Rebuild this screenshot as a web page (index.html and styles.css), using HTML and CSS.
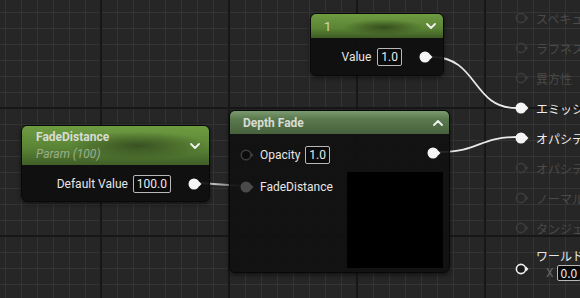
FILE: index.html
```html
<!DOCTYPE html>
<html>
<head>
<meta charset="utf-8">
<link rel="stylesheet" href="styles.css">
</head>
<body>
<div class="canvas">
  <div class="result">
    <div class="prow off"><svg class="pin" viewBox="0 0 14 12"><circle cx="6" cy="6" r="4.6" class="hollow"/><path d="M11 3.5 L13.5 6 L11 8.5Z" class="arrow"/></svg><span>スペキュラー</span></div>
    <div class="prow off"><svg class="pin" viewBox="0 0 14 12"><circle cx="6" cy="6" r="4.6" class="hollow"/><path d="M11 3.5 L13.5 6 L11 8.5Z" class="arrow"/></svg><span>ラフネス</span></div>
    <div class="prow off"><svg class="pin" viewBox="0 0 14 12"><circle cx="6" cy="6" r="4.6" class="hollow"/><path d="M11 3.5 L13.5 6 L11 8.5Z" class="arrow"/></svg><span>異方性</span></div>
    <div class="prow on"><svg class="pin" viewBox="0 0 14 12"><circle cx="6" cy="6" r="5.5" class="fill"/><path d="M11 3.5 L13.5 6 L11 8.5Z" class="arrow"/></svg><span>エミッシブカラー</span></div>
    <div class="prow on"><svg class="pin" viewBox="0 0 14 12"><circle cx="6" cy="6" r="5.5" class="fill"/><path d="M11 3.5 L13.5 6 L11 8.5Z" class="arrow"/></svg><span>オパシティ</span></div>
    <div class="prow off"><svg class="pin" viewBox="0 0 14 12"><circle cx="6" cy="6" r="4.6" class="hollow"/><path d="M11 3.5 L13.5 6 L11 8.5Z" class="arrow"/></svg><span>オパシティマスク</span></div>
    <div class="prow off"><svg class="pin" viewBox="0 0 14 12"><circle cx="6" cy="6" r="4.6" class="hollow"/><path d="M11 3.5 L13.5 6 L11 8.5Z" class="arrow"/></svg><span>ノーマル</span></div>
    <div class="prow off"><svg class="pin" viewBox="0 0 14 12"><circle cx="6" cy="6" r="4.6" class="hollow"/><path d="M11 3.5 L13.5 6 L11 8.5Z" class="arrow"/></svg><span>タンジェント</span></div>
    <div class="prow world">
      <svg class="pin" viewBox="0 0 14 12"><circle cx="6" cy="6" r="4.6" class="hollow-w"/><path d="M11 3.5 L13.5 6 L11 8.5Z" class="arrow-w"/></svg>
      <div class="wcol">
        <span>ワールドポジションオフセット</span>
        <div class="xrow"><span class="xl">X</span><span class="box">0.0</span></div>
      </div>
    </div>
  </div>

  <svg class="wires" width="580" height="298" viewBox="0 0 580 298">
    <defs>
      <linearGradient id="g1" x1="0" x2="1" y1="0" y2="0">
        <stop offset="0" stop-color="#f4f4f4"/>
        <stop offset="1" stop-color="#5a5a5a"/>
      </linearGradient>
    </defs>
    <path d="M432 57 C 478 57, 472 108, 516 108" class="wire"/>
    <path d="M440 152 C 478 152, 480 137, 516 137" class="wire"/>
    <path d="M200 183 L 242 186" stroke="url(#g1)" stroke-width="1.8" fill="none"/>
  </svg>

  <div class="node n-const">
    <div class="hdr hdr-const">
      <span class="ttl">1</span>
      <svg class="chev" viewBox="0 0 10 6"><path d="M1 1 L5 5 L9 1"/></svg>
    </div>
    <div class="body body-out">
      <span class="lbl">Value</span><span class="box">1.0</span>
      <svg class="pin opin" viewBox="0 0 14 12"><circle cx="6" cy="6" r="5.5" class="fill"/><path d="M11 3.5 L13.5 6 L11 8.5Z" class="arrow"/></svg>
    </div>
  </div>

  <div class="node n-param">
    <div class="hdr hdr-param">
      <div class="tcol">
        <span class="ttl">FadeDistance</span>
        <span class="sub">Param (100)</span>
      </div>
      <svg class="chev" viewBox="0 0 10 6"><path d="M1 1 L5 5 L9 1"/></svg>
    </div>
    <div class="body body-out">
      <span class="lbl">Default Value</span><span class="box">100.0</span>
      <svg class="pin opin" viewBox="0 0 14 12"><circle cx="6" cy="6" r="5.5" class="fill"/><path d="M11 3.5 L13.5 6 L11 8.5Z" class="arrow"/></svg>
    </div>
  </div>

  <div class="node n-depth">
    <div class="hdr hdr-depth">
      <span class="ttl">Depth Fade</span>
      <svg class="chev" viewBox="0 0 10 6"><path d="M1 5 L5 1 L9 5"/></svg>
    </div>
    <div class="dbody">
      <div class="inputs">
        <div class="irow"><svg class="pin" viewBox="0 0 14 12"><circle cx="6" cy="6" r="4.8" class="hollow-d"/><path d="M11 3.5 L13.5 6 L11 8.5Z" class="arrow-d"/></svg><span class="lbl">Opacity</span><span class="box">1.0</span></div>
        <div class="irow"><svg class="pin" viewBox="0 0 14 12"><circle cx="6" cy="6" r="5.5" class="fill-g"/><path d="M11 3.5 L13.5 6 L11 8.5Z" class="arrow-g"/></svg><span class="lbl">FadeDistance</span></div>
      </div>
      <div class="outs">
        <svg class="pin dpin" viewBox="0 0 14 12"><circle cx="6" cy="6" r="5.5" class="fill"/><path d="M11 3.5 L13.5 6 L11 8.5Z" class="arrow"/></svg>
        <div class="preview"></div>
      </div>
    </div>
  </div>
</div>
</body>
</html>
```

FILE: styles.css
```css
html, body {
  margin: 0;
  padding: 0;
}
body {
  font-family: Roboto, "Noto Sans CJK JP", sans-serif;
  font-size: 12px;
  color: #e6e6e6;
}
.canvas {
  position: relative;
  width: 580px;
  height: 298px;
  overflow: hidden;
  background-color: #262626;
  background-image:
    linear-gradient(to right, #171717 2px, transparent 2px),
    linear-gradient(to bottom, #171717 2px, transparent 2px),
    linear-gradient(to right, #343434 1px, transparent 1px),
    linear-gradient(to bottom, #343434 1px, transparent 1px);
  background-size: 128px 128px, 128px 128px, 16px 16px, 16px 16px;
  background-position: 100px 0, 0 107px, 5px 0, 0 12px;
}

/* wires */
.wires {
  position: absolute;
  left: 0;
  top: 0;
}
.wire {
  fill: none;
  stroke: #e8e8e8;
  stroke-width: 1.8;
}

/* pins */
.pin {
  width: 14px;
  height: 12px;
  flex: none;
}
.fill { fill: #f5f5f5; }
.arrow { fill: #f5f5f5; }
.hollow { fill: none; stroke: #3b3b3b; stroke-width: 1.6; }
.hollow-w { fill: #1a1a1a; stroke: #f0f0f0; stroke-width: 1.6; }
.arrow-w { fill: #f0f0f0; }
.hollow-d { fill: #0c0c0c; stroke: #3c3c3c; stroke-width: 1.4; }
.arrow-d { fill: #3c3c3c; }
.fill-g { fill: #4a4a4a; }
.arrow-g { fill: #4a4a4a; }
.hollow + .arrow { fill: #3b3b3b; }

/* nodes */
.node {
  position: absolute;
  box-sizing: border-box;
  border: 1px solid #080808;
  border-radius: 6px;
  background: rgba(14, 15, 14, 0.93);
  overflow: hidden;
  box-shadow: 0 2px 4px rgba(0, 0, 0, 0.5);
}
.hdr {
  display: flex;
  align-items: center;
  justify-content: space-between;
  box-sizing: border-box;
  padding: 0 7px 0 13px;
  color: #d8dcd4;
}
.ttl {
  font-weight: 700;
  font-size: 12px;
}
.chev {
  width: 10px;
  height: 6px;
  fill: none;
  stroke: #f2f2f2;
  stroke-width: 1.8;
  stroke-linecap: round;
  stroke-linejoin: round;
}
.box {
  box-sizing: border-box;
  height: 18px;
  line-height: 16px;
  padding: 0 3px;
  border: 1px solid #b8b8b8;
  border-radius: 2px;
  background: #0b0b0b;
  color: #eaeaea;
  font-size: 12px;
}
.lbl {
  color: #e6e6e6;
}

/* constant node */
.n-const {
  left: 310px;
  top: 13px;
  width: 134px;
  height: 63px;
}
.hdr-const {
  height: 24px;
  background:
    radial-gradient(ellipse 40px 8px at 55% 55%, rgba(40, 60, 22, 0.75), transparent),
    linear-gradient(to bottom, #6f9b42 0%, #5b8434 60%, #3d5a24 100%);
}
.hdr-const .ttl {
  font-weight: 400;
  font-size: 13px;
  color: #cfd8c4;
}
.body-out {
  display: flex;
  align-items: center;
  justify-content: flex-end;
  height: 18px;
  padding: 10px 10px 10px 0;
}
.body-out .lbl {
  margin-right: 6px;
}
.body-out .opin {
  margin-left: 17px;
}

/* param node */
.n-param {
  left: 21px;
  top: 125px;
  width: 189px;
  height: 77px;
}
.n-param .body-out {
  padding: 10px 7px 10px 0;
}
.n-param .body-out .lbl {
  margin-right: 5px;
}
.hdr-param {
  height: 39px;
  padding: 0 9px 0 14px;
  background:
    radial-gradient(ellipse 70px 14px at 62% 50%, rgba(40, 58, 24, 0.7), transparent),
    linear-gradient(to bottom, #6e9c40 0%, #5b8536 55%, #3f5f27 100%);
}
.tcol {
  display: flex;
  flex-direction: column;
  line-height: 17px;
}
.sub {
  font-style: italic;
  color: #9cae8c;
}

/* depth fade node */
.n-depth {
  left: 229px;
  top: 110px;
  width: 221px;
  height: 163px;
  background: rgba(16, 17, 16, 0.9);
}
.hdr-depth {
  height: 23px;
  padding: 0 6px 0 13px;
  background: linear-gradient(to bottom, #7c9a70 0%, #5a7a4e 35%, #46613c 100%);
}
.dbody {
  display: flex;
  justify-content: space-between;
  padding: 0 6px 0 10px;
}
.inputs {
  display: flex;
  flex-direction: column;
  gap: 14px;
  padding-top: 12px;
}
.irow {
  display: flex;
  align-items: center;
  height: 18px;
}
.irow .pin {
  margin-right: 6px;
}
.irow .lbl {
  margin-right: 5px;
}
.outs {
  display: flex;
  flex-direction: column;
  align-items: flex-end;
  padding-top: 13px;
}
.dpin {
  margin-right: 2px;
  margin-bottom: 13px;
}
.preview {
  width: 96px;
  height: 96px;
  background: #000;
}

/* material result node */
.result {
  position: absolute;
  left: 501px;
  top: 3px;
  width: 90px;
  height: 310px;
  box-sizing: border-box;
  padding-left: 14px;
  font-family: "Noto Sans CJK JP", Roboto, sans-serif;
  white-space: nowrap;
}
.result::before {
  content: "";
  position: absolute;
  left: 0;
  top: -10px;
  right: 0;
  bottom: 0;
  background: rgba(14, 14, 14, 0.62);
  border-left: 1px solid #141414;
  z-index: -1;
}
.prow {
  display: flex;
  align-items: center;
  height: 30px;
  gap: 7px;
}
.prow.off { color: #4a4a4a; }
.prow.on { color: #eeeeee; }
.prow.world {
  align-items: flex-start;
  height: auto;
  padding-top: 6px;
  color: #e6e6e6;
}
.prow.world .pin {
  margin-top: 14px;
}
.wcol {
  display: flex;
  flex-direction: column;
  line-height: 14px;
}
.xrow {
  display: flex;
  align-items: center;
  gap: 3px;
  margin-top: 2px;
  padding-left: 10px;
}
.xl {
  color: #666;
  font-family: Roboto, sans-serif;
}
.xrow .box {
  height: 16px;
  line-height: 14px;
}
```
